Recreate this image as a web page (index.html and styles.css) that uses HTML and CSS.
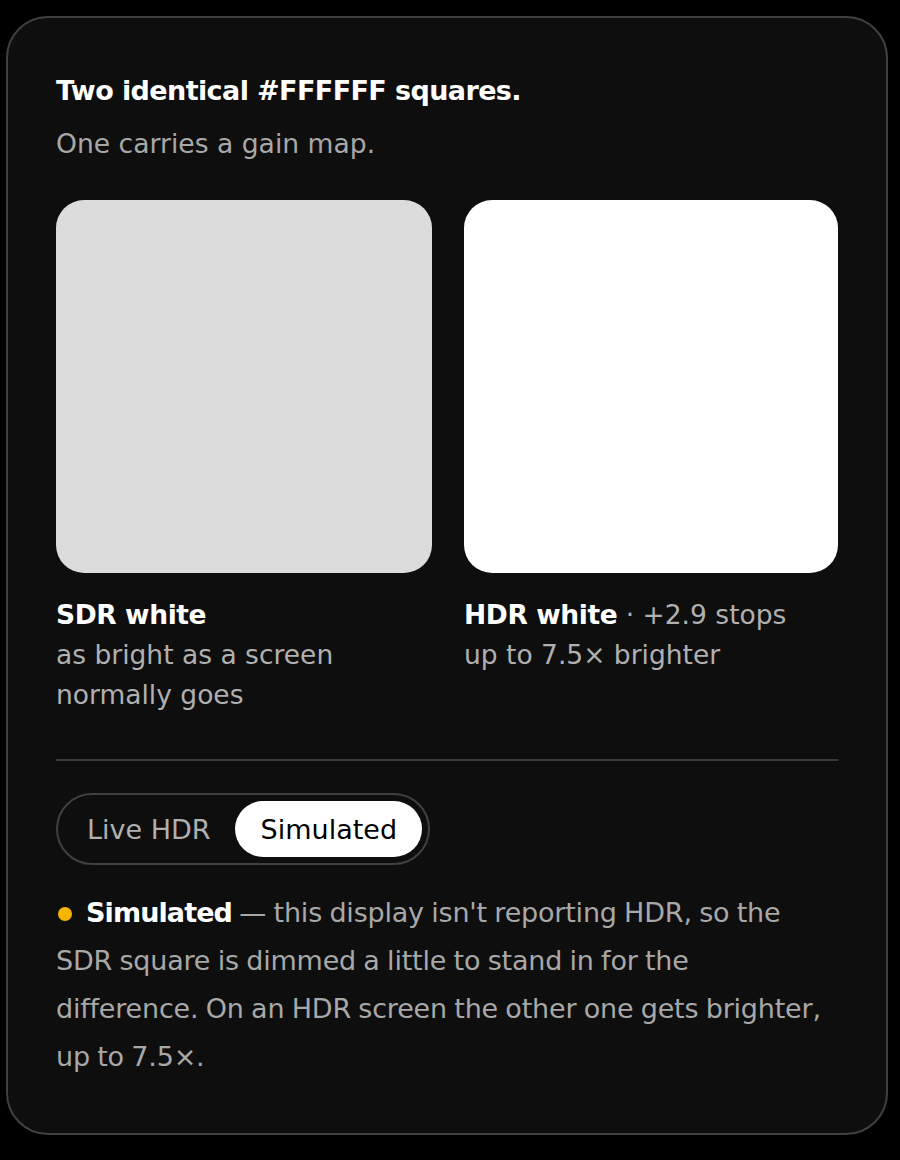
FILE: index.html
```html
<!DOCTYPE html>
<html>
<head>
  <meta charset="UTF-8">
  <title>Gain map demo</title>
  <link rel="stylesheet" href="styles.css">
</head>
<body>
  <div class="card">
    <h2 class="title">Two identical #FFFFFF squares.</h2>
    <p class="subtitle">One carries a gain map.</p>

    <div class="swatches">
      <div class="swatch">
        <div class="square sdr"></div>
        <div class="label"><b>SDR white</b></div>
        <div class="note">as bright as a screen normally goes</div>
      </div>
      <div class="swatch">
        <div class="square hdr"></div>
        <div class="label"><b>HDR white</b> · +2.9 stops</div>
        <div class="note">up to 7.5× brighter</div>
      </div>
    </div>

    <hr class="divider">

    <div class="toggle">
      <button class="opt">Live HDR</button>
      <button class="opt active">Simulated</button>
    </div>

    <p class="status">
      <span class="dot"></span><b>Simulated</b> — this display isn't reporting HDR, so the SDR square is dimmed a little to stand in for the difference. On an HDR screen the other one gets brighter, up to 7.5×.
    </p>
  </div>
</body>
</html>
```

FILE: styles.css
```css
body {
  margin: 0;
  padding: 16px 0 26px 6px;
  background-color: #000;
  font-family: "DejaVu Sans", Inter, sans-serif;
  color: #fff;
}
.card {
  width: 782px;
  padding: 54px 48px 52px 48px;
  background-color: #0e0e0e;
  border: 2px solid #404040;
  border-radius: 42px;
}
.title {
  margin: 0;
  font-size: 27px;
  font-weight: 600;
  line-height: 38px;
  letter-spacing: -0.6px;
}
.subtitle {
  margin: 16px 0 0;
  font-size: 26.6px;
  line-height: 36px;
  color: #a8a8a8;
}
.swatches {
  display: grid;
  grid-template-columns: 376px 374px;
  gap: 32px;
  margin-top: 38px;
}
.square {
  height: 373px;
  border-radius: 28px;
}
.square.sdr {
  background-color: #dcdcdc;
}
.square.hdr {
  background-color: #fff;
}
.label {
  margin-top: 22px;
  font-size: 26.5px;
  line-height: 40px;
  color: #b0b0b0;
}
.label b {
  font-weight: 600;
  color: #fff;
  letter-spacing: -0.4px;
}
.note {
  font-size: 26.5px;
  line-height: 40px;
  color: #b0b0b0;
}
.divider {
  margin: 44px 0 0;
  border: none;
  border-top: 2px solid #3a3a3a;
}
.toggle {
  display: inline-flex;
  margin-top: 32px;
  padding: 6px;
  border: 2px solid #404040;
  border-radius: 40px;
}
.opt {
  height: 56px;
  padding: 0 25px 0 26px;
  border: none;
  border-radius: 28px;
  background: none;
  font-family: inherit;
  font-size: 27px;
  color: #b0b0b0;
  cursor: pointer;
}
.opt:first-child {
  padding: 0 24px 0 23px;
}
.opt.active {
  background-color: #fff;
  color: #000;
}
.status {
  margin: 24px 0 0;
  font-size: 27px;
  line-height: 48px;
  letter-spacing: -0.2px;
  word-spacing: -1px;
  color: #a8a8a8;
}
.status b {
  font-weight: 600;
  color: #fff;
  letter-spacing: -0.9px;
}
.dot {
  display: inline-block;
  width: 14px;
  height: 14px;
  margin: 0 14px 0 2px;
  border-radius: 50%;
  background-color: #f7b500;
  vertical-align: 1px;
}
```
